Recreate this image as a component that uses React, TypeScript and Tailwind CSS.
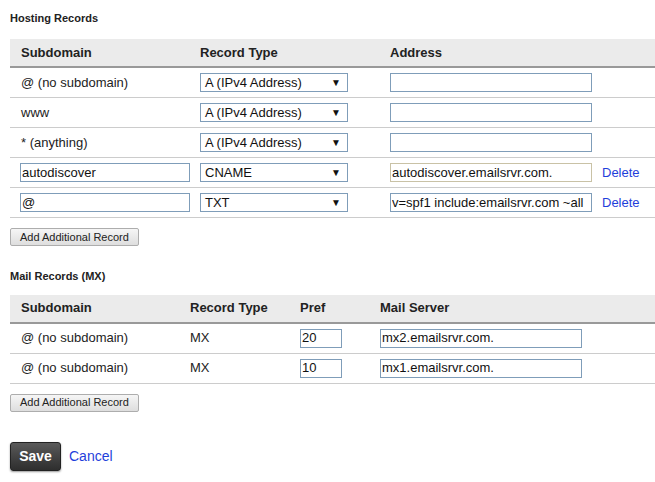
const inputCls = 'h-[19px] border border-[#7f9db9] px-[1px] text-[13px] text-[#111] outline-none bg-white'

function Select({ value }: { value: string }) {
  return (
    <div className="flex h-[19px] w-[148px] items-center justify-between border border-[#7f9db9] bg-white pl-[4px] pr-[6px] text-[13px] text-[#111]">
      <span>{value}</span>
      <span className="text-[10px] leading-none">▼</span>
    </div>
  )
}

function AddButton() {
  return (
    <button className="mt-[10px] h-[18px] rounded-[2px] border border-[#adadad] bg-gradient-to-b from-[#f6f6f6] to-[#dedede] px-[9px] text-[11px] leading-none text-[#222]">
      Add Additional Record
    </button>
  )
}

const hosting = [
  { sub: '@ (no subdomain)', type: 'A (IPv4 Address)', addr: '', editable: false },
  { sub: 'www', type: 'A (IPv4 Address)', addr: '', editable: false },
  { sub: '* (anything)', type: 'A (IPv4 Address)', addr: '', editable: false },
  { sub: 'autodiscover', type: 'CNAME', addr: 'autodiscover.emailsrvr.com.', editable: true },
  { sub: '@', type: 'TXT', addr: 'v=spf1 include:emailsrvr.com ~all', editable: true },
]

const mail = [
  { pref: '20', server: 'mx2.emailsrvr.com.' },
  { pref: '10', server: 'mx1.emailsrvr.com.' },
]

export default function App() {
  return (
    <div className="min-h-[482px] bg-white pl-[10px] pt-[11px] text-[#222]" style={{ fontFamily: '"Liberation Sans", Arial, sans-serif' }}>
      <h3 className="text-[11px] font-bold leading-[14px]">Hosting Records</h3>

      <div className="mt-[14px]">
        <div className="grid h-[29px] grid-cols-[180px_190px_212px_1fr] items-center border-b-2 border-[#999] bg-[#ebebeb] text-[13px] font-bold">
          <div className="pl-[11px]">Subdomain</div>
          <div className="pl-[10px]">Record Type</div>
          <div className="pl-[10px]">Address</div>
          <div />
        </div>
        {hosting.map((r, i) => (
          <div key={i} className="grid h-[30px] grid-cols-[180px_190px_212px_1fr] items-center border-b border-[#ccc] text-[13px]">
            <div className="pl-[10px]">
              {r.editable ? (
                <input defaultValue={r.sub} className={`${inputCls} w-[170px]`} />
              ) : (
                <span className="pl-[1px]">{r.sub}</span>
              )}
            </div>
            <div className="pl-[10px]">
              <Select value={r.type} />
            </div>
            <div className="pl-[10px]">
              <input
                defaultValue={r.addr}
                className={`${inputCls} w-[202px] ${i === 3 ? 'border-[#c9c2a6]' : ''}`}
              />
            </div>
            <div className="pl-[10px]">
              {r.editable && <a className="text-[13px] text-[#1f3fdb] cursor-pointer">Delete</a>}
            </div>
          </div>
        ))}
        <AddButton />
      </div>

      <h3 className="mt-[21px] text-[11px] font-bold leading-[14px]">Mail Records (MX)</h3>

      <div className="mt-[12px]">
        <div className="grid h-[29px] grid-cols-[170px_110px_80px_1fr] items-center border-b-2 border-[#999] bg-[#ebebeb] text-[13px] font-bold">
          <div className="pl-[11px]">Subdomain</div>
          <div className="pl-[10px]">Record Type</div>
          <div className="pl-[10px]">Pref</div>
          <div className="pl-[10px]">Mail Server</div>
        </div>
        {mail.map((m, i) => (
          <div key={i} className="grid h-[30px] grid-cols-[170px_110px_80px_1fr] items-center border-b border-[#ccc] text-[13px]">
            <div className="pl-[11px]">@ (no subdomain)</div>
            <div className="pl-[10px]">MX</div>
            <div className="pl-[10px]">
              <input defaultValue={m.pref} className={`${inputCls} w-[42px]`} />
            </div>
            <div className="pl-[10px]">
              <input defaultValue={m.server} className={`${inputCls} w-[202px]`} />
            </div>
          </div>
        ))}
        <AddButton />
      </div>

      <div className="mt-[29px] flex items-center gap-[8px]">
        <button className="h-[29px] w-[51px] rounded-[3px] border border-[#222] bg-gradient-to-b from-[#5a5a5a] to-[#2e2e2e] text-[14px] font-bold text-white shadow-[0_1px_2px_rgba(0,0,0,0.4)]">
          Save
        </button>
        <a className="cursor-pointer text-[14px] text-[#1f3fdb]">Cancel</a>
      </div>
    </div>
  )
}
